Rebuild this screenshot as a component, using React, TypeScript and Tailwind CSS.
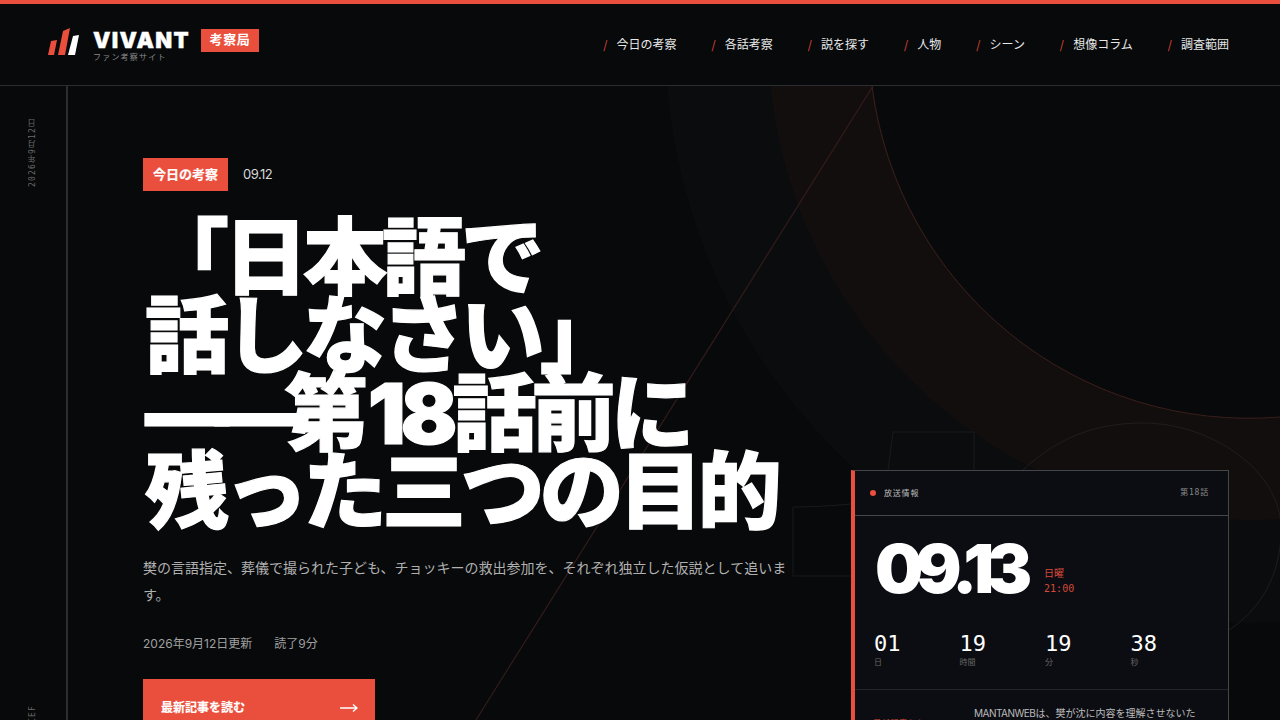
import React from "react";

const sans = "font-['Inter','Noto_Sans_CJK_JP',sans-serif]";

const nav = ["今日の考察", "各話考察", "説を探す", "人物", "シーン", "想像コラム", "調査範囲"];
const counts = [
  ["01", "日"],
  ["19", "時間"],
  ["19", "分"],
  ["38", "秒"],
];

function Backdrop() {
  return (
    <svg className="absolute left-0 top-0 w-[1280px] h-[720px]" viewBox="0 0 1280 720" fill="none">
      <circle cx="1250" cy="38" r="585" fill="#0b0c0e" />
      <circle cx="1250" cy="38" r="482" fill="#120e0e" />
      <circle cx="1250" cy="38" r="380" fill="#07090b" />
      <path d="M872 86 A380 380 0 0 0 1280 417" stroke="#3a1e1b" strokeWidth="1" />
      <path d="M873 86 L476 720" stroke="#341c1a" strokeWidth="1.2" />
      <path d="M974 470 V432 H893 L888 470 M851 504 C830 506 810 507 793 507 V576 H851" stroke="#191a1d" strokeWidth="1" />
      <path d="M1023 470 C1060 435 1100 423 1143 423 C1210 423 1282 470 1281 530 C1281 575 1260 610 1229 630" stroke="#1f1d1e" strokeWidth="1" />
    </svg>
  );
}

function Logo() {
  return (
    <svg width="32" height="28" viewBox="0 0 32 28" className="block">
      <polygon points="3,13 9,12 6,27 0,27" fill="#ea4f3d" />
      <polygon points="15,3 22,0 17,27 10,27" fill="#ea4f3d" />
      <polygon points="25,8 31,7 27,27 20,27" fill="#ffffff" />
    </svg>
  );
}

export default function App() {
  return (
    <div className={`relative w-[1280px] h-[720px] overflow-hidden bg-[#07090b] text-white ${sans}`}>
      <Backdrop />
      <div className="relative flex flex-col h-full">
        <header className="h-[86px] shrink-0 border-t-4 border-b border-t-[#ea4f3d] border-b-[#2c2d2f] bg-[#07090b] flex items-center justify-between pl-12 pr-[51px]">
          <div className="flex items-start">
            <Logo />
            <div className="ml-[13px] mt-[1px] flex flex-col">
              <span className="text-[22px] leading-[22px] font-black tracking-[0.06em] [-webkit-text-stroke:0.4px_white]">VIVANT</span>
              <span className="text-[8px] leading-[10px] mt-[1px] tracking-[0.15em] text-[#8a8a8a]">ファン考察サイト</span>
            </div>
            <span className="ml-[11px] mt-[1px] h-[23px] w-[58px] bg-[#ea4f3d] flex items-center justify-center text-[13px] font-bold tracking-[0.04em]">考察局</span>
          </div>
          <nav className="flex items-center gap-[34.7px] mt-[2px]">
            {nav.map((n) => (
              <a key={n} className="flex items-center gap-[9px] text-xs text-[#e8e8e8]">
                <span className="text-[#ea4f3d] opacity-90 text-[13px] font-light">/</span>
                {n}
              </a>
            ))}
          </nav>
        </header>
        <div className="flex flex-1 min-h-0">
          <aside className="w-[68px] shrink-0 border-r-2 border-[#2c2d2f] flex flex-col justify-between items-center pt-8 h-[690px]">
            <span className="[writing-mode:vertical-rl] rotate-180 font-['DejaVu_Sans_Mono','Noto_Sans_CJK_JP',monospace] text-[8px] tracking-[0.14em] text-[#6a6a6a]">2026年9月12日</span>
            <span className="[writing-mode:vertical-rl] rotate-180 font-['DejaVu_Sans_Mono',monospace] text-[8px] tracking-[0.14em] text-[#6a6a6a]">VIVANT BRIEF</span>
          </aside>
          <main className="relative flex-1 min-w-0 flex justify-between pl-[75px] pr-[51px]">
            <div className="w-[645px] shrink-0 pt-[72px]">
              <div className="flex items-center gap-[15px]">
                <span className="h-[33px] w-[85px] bg-[#ea4f3d] flex items-center justify-center text-[13px] font-bold [-webkit-text-stroke:0.2px_white]">今日の考察</span>
                <span className="text-[13px] tracking-[-0.04em] text-[#d8d8d8]">09.12</span>
              </div>
              <h1 className="mt-[28px] ml-[2px] w-[660px] text-[84px] leading-[78px] font-black tracking-[-0.06em] [-webkit-text-stroke:1.2px_white]">
                「日本語で
                <br />
                話しなさい」
                <br />
                <span className="tracking-[-0.17em]">——</span>
                <span className="tracking-[-0.01em]">第</span>18話前に
                <br />
                残った三つの目的
              </h1>
              <p className="mt-[23px] text-sm leading-[27px] text-[#b0b0b0]">
                樊の言語指定、葬儀で撮られた子ども、チョッキーの救出参加を、それぞれ独立した仮説として追います。
              </p>
              <div className="mt-[28px] flex gap-[22px] text-xs text-[#a0a0a0]">
                <span>2026年9月12日更新</span>
                <span>読了9分</span>
              </div>
              <a className="mt-[27px] flex items-center justify-between w-[232px] h-[58px] bg-[#ea4f3d] pl-[18px] pr-[17px] text-xs font-bold [-webkit-text-stroke:0.2px_white]">
                最新記事を読む
                <svg width="18" height="10" viewBox="0 0 18 10" fill="none" stroke="#fff" strokeWidth="1.4">
                  <path d="M0 5H17M13 1.5L17 5L13 8.5" />
                </svg>
              </a>
            </div>
            <section className="absolute left-[783px] top-[384px] w-[378px] border border-l-4 border-[#44464a] border-l-[#ea4f3d] bg-[#0c0d12]">
              <div className="h-[45px] flex items-center justify-between pl-[15px] pr-[19px] border-b border-[#44464a]">
                <span className="flex items-center gap-2 text-[8px] tracking-[0.1em] text-[#bbbbbb]">
                  <span className="w-[6px] h-[6px] rounded-full bg-[#ea4f3d]" />
                  放送情報
                </span>
                <span className="text-[8px] tracking-[0.1em] text-[#888888] font-['DejaVu_Sans_Mono','Noto_Sans_CJK_JP',monospace]">第18話</span>
              </div>
              <div className="flex items-end px-5 pt-[18px]">
                <span className="text-[68px] leading-[68px] font-black tracking-[-0.11em]">09.13</span>
                <span className="ml-[19px] mb-[6px] flex flex-col text-[10px] leading-[15px] text-[#d6493a] font-['DejaVu_Sans_Mono','Noto_Sans_CJK_JP',monospace] tracking-[0.01em]">
                  <span>日曜</span>
                  <span>21:00</span>
                </span>
              </div>
              <div className="grid grid-cols-4 pl-[19px] pr-[12px] pt-[29px] pb-[22px] border-b border-[#24252a]">
                {counts.map(([v, l], i) => (
                  <div key={i} className="flex flex-col">
                    <span className="font-['DejaVu_Sans_Mono',monospace] text-[22px] leading-[26px]">{v}</span>
                    <span className="text-[8px] leading-[10px] text-[#666666]">{l}</span>
                  </div>
                ))}
              </div>
              <div className="flex pl-[18px] pr-[27px] pt-[14px] pb-[16px]">
                <span className="w-[101px] shrink-0 pt-[13px] text-[8px] tracking-[0.08em] text-[#d6493a]">最新記事から</span>
                <p className="text-[10px] leading-[18px] text-[#bbbbbb]">
                  <span className="tracking-[-0.05em]">MANTANWEB</span>は、樊が沈に内容を理解させないため、日本語での会話を命じたと報じた。
                </p>
              </div>
            </section>
          </main>
        </div>
      </div>
    </div>
  );
}
